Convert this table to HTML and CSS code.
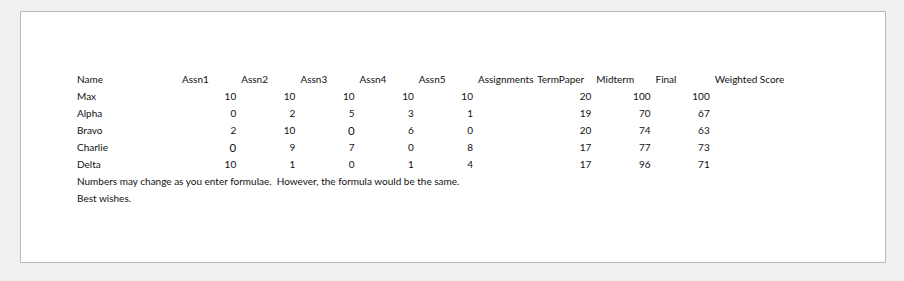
FILE: index.html
```html
<!DOCTYPE html>
<html>
<head>
    <title>Grades</title>
    <link rel="stylesheet" href="styles.css">
</head>
<body>
    <div class="sheet">
        <table class="grades">
            <colgroup>
                <col class="col-name">
                <col class="col-score" span="9">
                <col>
            </colgroup>
            <thead>
                <tr>
                    <th>Name</th>
                    <th>Assn1</th>
                    <th>Assn2</th>
                    <th>Assn3</th>
                    <th>Assn4</th>
                    <th>Assn5</th>
                    <th>Assignments</th>
                    <th>TermPaper</th>
                    <th>Midterm</th>
                    <th>Final</th>
                    <th>Weighted Score</th>
                </tr>
            </thead>
            <tbody>
                <tr>
                    <td>Max</td>
                    <td class="num">10</td>
                    <td class="num">10</td>
                    <td class="num">10</td>
                    <td class="num">10</td>
                    <td class="num">10</td>
                    <td></td>
                    <td class="num">20</td>
                    <td class="num">100</td>
                    <td class="num">100</td>
                    <td></td>
                </tr>
                <tr>
                    <td>Alpha</td>
                    <td class="num">0</td>
                    <td class="num">2</td>
                    <td class="num">5</td>
                    <td class="num">3</td>
                    <td class="num">1</td>
                    <td></td>
                    <td class="num">19</td>
                    <td class="num">70</td>
                    <td class="num">67</td>
                    <td></td>
                </tr>
                <tr>
                    <td>Bravo</td>
                    <td class="num">2</td>
                    <td class="num">10</td>
                    <td class="num big">0</td>
                    <td class="num">6</td>
                    <td class="num">0</td>
                    <td></td>
                    <td class="num">20</td>
                    <td class="num">74</td>
                    <td class="num">63</td>
                    <td></td>
                </tr>
                <tr>
                    <td>Charlie</td>
                    <td class="num big">0</td>
                    <td class="num">9</td>
                    <td class="num">7</td>
                    <td class="num">0</td>
                    <td class="num">8</td>
                    <td></td>
                    <td class="num">17</td>
                    <td class="num">77</td>
                    <td class="num">73</td>
                    <td></td>
                </tr>
                <tr>
                    <td>Delta</td>
                    <td class="num">10</td>
                    <td class="num">1</td>
                    <td class="num">0</td>
                    <td class="num">1</td>
                    <td class="num">4</td>
                    <td></td>
                    <td class="num">17</td>
                    <td class="num">96</td>
                    <td class="num">71</td>
                    <td></td>
                </tr>
            </tbody>
        </table>
        <p class="note">Numbers may change as you enter formulae.&nbsp; However, the formula would be the same.</p>
        <p class="note">Best wishes.</p>
    </div>
</body>
</html>
```

FILE: styles.css
```css
body {
    margin: 0;
    padding: 11px 18px 0 20px;
    background: #f0f0f0;
    font-family: Lato, "Liberation Sans", sans-serif;
    font-size: 10px;
    color: #111;
}

.sheet {
    height: 252px;
    box-sizing: border-box;
    background: #fff;
    border: 1px solid #b7bbc0;
    padding: 59px 0 0 53px;
}

.grades {
    border-collapse: collapse;
    table-layout: fixed;
    width: 820px;
}

.col-name {
    width: 105px;
}

.col-score {
    width: 59.2px;
}

.grades th,
.grades td {
    height: 17px;
    padding: 0 2px 0 3px;
    text-align: left;
    font-weight: normal;
    white-space: nowrap;
    line-height: 17px;
}

.grades td.num {
    text-align: right;
}

/* a couple of cells were typed in a larger size */
.grades td.big {
    font-size: 11.5px;
}

.note {
    margin: 0;
    padding-left: 3px;
    height: 17px;
    line-height: 17px;
    white-space: nowrap;
}
```
